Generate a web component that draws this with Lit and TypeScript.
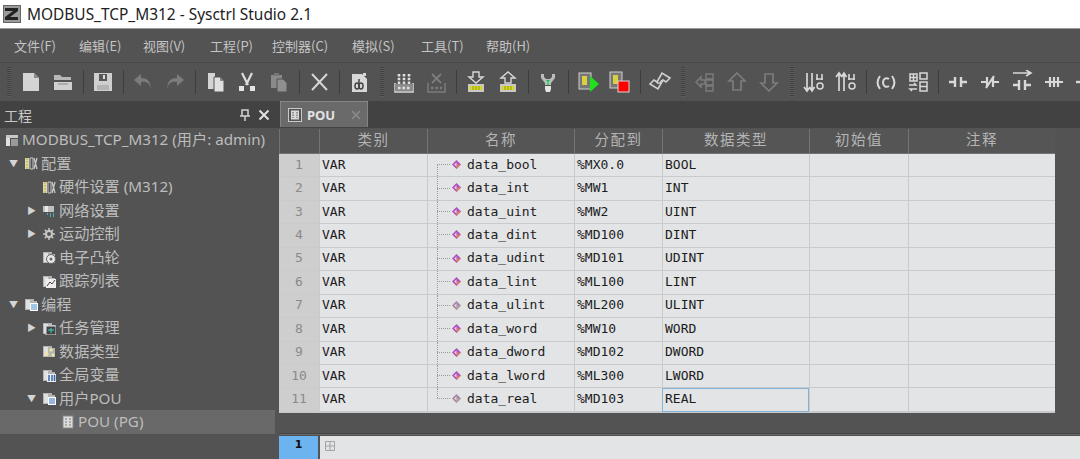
import { LitElement, html, css, svg } from "lit";
import { customElement } from "lit/decorators.js";

const I = (c: unknown) => html`<svg class="tb" viewBox="0 0 24 24" width="24" height="24">${c}</svg>`;
const L = "#d8d8d8", D = "#7c7c7c";

const toolbar: (string | unknown)[] = [
  "grip",
  I(svg`<path d="M4 3h11l5 5v13H4z" fill="#d4d4d4"/><path d="M15 3v5h5" fill="#8a8a8a"/>`),
  I(svg`<path d="M3 5h6l2 2h9v3H3z" fill="#b8b8b8"/><path d="M3 12h18v8H3z" fill="#d0d0d0"/><path d="M7 14h10" stroke="#8a8a8a"/>`),
  "sep",
  I(svg`<path d="M3 3h18v18H3z" fill="#cfcfcf"/><path d="M8 4h8v7H8z" fill="#585858"/><path d="M12 5h2v4h-2z" fill="#ddd"/><path d="M6 15h12v5H6z" fill="#b4b4b4"/>`),
  "sep",
  I(svg`<path d="M19 20c1-6-3-9-9-8v4L3 10l7-6v4c7 0 11 5 9 12z" fill="${D}"/>`),
  I(svg`<path d="M5 20c-1-6 3-9 9-8v4l7-6-7-6v4C7 8 3 13 5 20z" fill="${D}"/>`),
  "sep",
  I(svg`<path d="M5 3h7v16H5z" fill="#d4d4d4"/><path d="M11 7h6l4 4v11H11z" fill="#e0e0e0" stroke="#555"/><path d="M17 7v4h4" fill="#888"/>`),
  I(svg`<path d="M7 3l6 12M17 3l-6 12" stroke="#dcdcdc" stroke-width="2.2"/><rect x="4" y="16" width="5" height="5" fill="#e4e4e4"/><rect x="15" y="16" width="5" height="5" fill="#e4e4e4"/>`),
  I(svg`<path d="M4 5h11v13H4z" fill="#8a8a8a"/><path d="M7 3h5v3H7z" fill="#777"/><path d="M10 9h6l4 4v9H10z" fill="#8f8f8f" stroke="#555"/>`),
  "sep",
  I(svg`<path d="M5 4l15 16M20 4L5 20" stroke="#d6d6d6" stroke-width="2"/>`),
  "sep",
  I(svg`<path d="M5 4h10l5 5v13H5z" fill="#d8d8d8"/><path d="M16 3h3v3h-3z" fill="#d8d8d8"/><ellipse cx="10" cy="16" rx="2" ry="3" fill="none" stroke="#444" stroke-width="1.500"/><ellipse cx="14" cy="16" rx="2" ry="3" fill="none" stroke="#444" stroke-width="1.500"/><path d="M12 9v5" stroke="#444" stroke-width="1.500"/>`),
  "grip",
  I(svg`<path d="M3 13v9h18v-9" fill="none" stroke="${L}" stroke-width="1.500"/><path d="M3 14h18v7H3z" fill="#8a8a8a"/><path d="M7 4v10M12 4v10M17 4v10" stroke="#e0e0e0" stroke-width="2.600" stroke-dasharray="2.500 1.200"/><path d="M6 18h12" stroke="#e0e0e0" stroke-width="2.600" stroke-dasharray="2.500 2"/>`),
  I(svg`<path d="M4 13v9h17v-9" fill="none" stroke="${D}" stroke-width="1.500"/><path d="M8 4l9 9M17 4L8 13" stroke="${D}" stroke-width="1.800"/><path d="M7 18h11" stroke="${D}" stroke-width="2.400" stroke-dasharray="2.500 2"/>`),
  "sep",
  I(svg`<path d="M9 2h6v5h4l-7 6-7-6h4z" fill="none" stroke="${L}" stroke-width="1.400"/><path d="M4 14h16v8H4z" fill="#c8c8c8"/><path d="M6 16h12v4H6z" fill="#d8d820"/><path d="M9 16v4M12 16v4M15 16v4" stroke="#9a9a20"/>`),
  I(svg`<path d="M9 13V8H5l7-6 7 6h-4v5z" fill="none" stroke="${L}" stroke-width="1.400"/><path d="M4 14h16v8H4z" fill="#c8c8c8"/><path d="M6 16h12v4H6z" fill="#d8d820"/><path d="M9 16v4M12 16v4M15 16v4" stroke="#9a9a20"/>`),
  "sep",
  I(svg`<path d="M5 4h3v3l2 2h4l2-2V4h3v4l-4 5v2h-6v-2L5 8z" fill="#bdbdbd"/><path d="M10 10h4l-2 3z" fill="#23c05a"/><path d="M11 13h2v2h-2z" fill="#30d070"/><path d="M9 16h6v3l-1 3h-4l-1-3z" fill="#e4e4e4"/>`),
  "sep",
  I(svg`<rect x="3" y="3" width="12" height="16" fill="#777" stroke="#cfcfcf"/><rect x="6" y="6" width="5" height="9" fill="#d8d040"/><path d="M14 6l9 8-9 8z" fill="#1fe01f"/>`),
  I(svg`<rect x="2" y="2" width="12" height="16" fill="#777" stroke="#cfcfcf"/><rect x="5" y="5" width="5" height="9" fill="#d8d040"/><rect x="10" y="11" width="11" height="11" fill="#ff0000" stroke="#d8d8d8"/>`),
  "sep",
  I(svg`<path d="M2 14l4-4 3 2 5-9 8 5-4 4-3-2-5 9z" fill="none" stroke="#d0d0d0" stroke-width="1.600"/><path d="M9 12c1 3 4 0 5-2" stroke="#d0d0d0" stroke-width="1.600" fill="none"/>`),
  "grip",
  I(svg`<path d="M3 12l5-5v3h4v4H8v3z" fill="none" stroke="${D}" stroke-width="1.500"/><path d="M13 4h7v5h-7zM13 10h7v5h-7zM13 16h7v5h-7z" fill="none" stroke="${D}" stroke-width="1.400"/>`),
  I(svg`<path d="M12 3l8 8h-4v9H8v-9H4z" fill="none" stroke="${D}" stroke-width="1.700"/>`),
  I(svg`<path d="M12 21l8-8h-4V4H8v9H4z" fill="none" stroke="${D}" stroke-width="1.700"/>`),
  "grip",
  I(svg`<path d="M5 3v17M2 17l3 4 3-4M10 3v17M7.500 17l2.500 4 2.500-4" stroke="${L}" stroke-width="1.700" fill="none"/><path d="M15 4v6M20 4v6M14 9h7" stroke="${L}" stroke-width="1.600" fill="none"/><circle cx="18" cy="16" r="3" fill="none" stroke="${L}" stroke-width="1.500"/>`),
  I(svg`<path d="M5 21V4M2 7l3-4 3 4M10 21V4M7.500 7l2.500-4 2.500 4" stroke="${L}" stroke-width="1.700" fill="none"/><path d="M15 4v6M20 4v6M14 9h7" stroke="${L}" stroke-width="1.600" fill="none"/><circle cx="18" cy="16" r="3" fill="none" stroke="${L}" stroke-width="1.500"/>`),
  "sep",
  I(svg`<path d="M6 6c-3 4-3 9 0 13M18 6c3 4 3 9 0 13" stroke="${L}" stroke-width="2" fill="none"/><path d="M15 9c-3-2-6 0-6 3.500s3 5.500 6 3.500" stroke="${L}" stroke-width="2" fill="none"/>`),
  I(svg`<path d="M4 4h7v7H4zM4 7.500h7M7.500 4v7M14 3h7v6h-7zM14 12h7v9h-7zM14 16.500h7" fill="none" stroke="${L}" stroke-width="1.500"/><path d="M3 15h7l-2-2M11 19H4l2 2" fill="none" stroke="${L}" stroke-width="1.500"/>`),
  "sep",
  I(svg`<path d="M3 12h6M15 12h6M9 7v10M15 7v10" stroke="${L}" stroke-width="2.400" fill="none"/>`),
  I(svg`<path d="M3 12h6M15 12h6M9 7v10M15 7v10M8 18L16 6" stroke="${L}" stroke-width="2.200" fill="none"/>`),
  I(svg`<path d="M3 3h17M16 0l5 3-5 3" stroke="${L}" stroke-width="1.600" fill="none"/><path d="M3 15h6M15 15h6M9 10v10M15 10v10" stroke="${L}" stroke-width="2.400" fill="none"/>`),
  I(svg`<path d="M3 12h18M8 7v10M12 7v10M16 7v10" stroke="${L}" stroke-width="2.200" fill="none"/>`),
  I(svg`<path d="M2 12h7" stroke="${L}" stroke-width="2.400" fill="none"/>`),
];

const menus = ["文件(F)", "编辑(E)", "视图(V)", "工程(P)", "控制器(C)", "模拟(S)", "工具(T)", "帮助(H)"];

const G = "#c8c8c8";
const folder = (c: string) => svg`<path d="M1 2h9v2h3v9H1z" fill="#b4b4b4"/><path d="M2 3h4v9H2z" fill="#e0e0e0"/>${c ? svg`<rect x="6" y="6" width="8" height="8" fill="#fff"/><path d="M7 8h6M7 10h6M7 12h6" stroke="${c}"/>` : ""}`;
const S = (c: unknown) => html`<svg class="ti" viewBox="0 0 14 14" width="14" height="14">${c}</svg>`;
const hw = S(svg`<rect x="1" y="2" width="4" height="11" fill="#d9d9b0"/><path d="M3 2v11" stroke="#c8a820" stroke-dasharray="2 1"/><path d="M6 2h3v11H6z" fill="none" stroke="${G}"/><path d="M10 2l3 11M13 2L10 13" stroke="${G}" stroke-width="1.300"/>`);

type Node = { lv: number; arrow?: string; icon: unknown; text: string; sel?: boolean };
const tree: Node[] = [
  { lv: 0, icon: S(svg`<path d="M1 2h12v3H1z" fill="#c8c8c8"/><path d="M1 5h4v8H1z" fill="#e0e0e0"/><path d="M6 6h7v7H6z" fill="#9a9a9a"/>`), text: "MODBUS_TCP_M312 (用户: admin)" },
  { lv: 1, arrow: "▼", icon: hw, text: "配置" },
  { lv: 2, icon: hw, text: "硬件设置 (M312)" },
  { lv: 2, arrow: "▶", icon: S(svg`<path d="M1 3h11v6H1z" fill="#c0c0c0"/><path d="M3 3h3v6H3z" fill="#e8e8e8"/><path d="M5 11h1M8 11h1M11 11h1M8 13h1M11 13h1" stroke="#4fd0e0" stroke-width="1.500"/>`), text: "网络设置" },
  { lv: 2, arrow: "▶", icon: S(svg`<circle cx="7" cy="7" r="3" fill="none" stroke="#c8c8c8" stroke-width="2"/><path d="M7 1v3M7 10v3M1 7h3M10 7h3M2.800 2.800l2 2M9.200 9.200l2 2M11.200 2.800l-2 2M4.800 9.200l-2 2" stroke="#c8c8c8" stroke-width="1.500"/>`), text: "运动控制" },
  { lv: 2, icon: S(svg`${folder("")}<circle cx="9" cy="9" r="4.500" fill="#e8e8e8" stroke="#666"/><circle cx="9" cy="9" r="1.500" fill="#666"/>`), text: "电子凸轮" },
  { lv: 2, icon: S(svg`${folder("")}<rect x="4" y="5" width="10" height="9" fill="#eee"/><path d="M5 12l3-4 2 2 3-4" stroke="#444" fill="none"/>`), text: "跟踪列表" },
  { lv: 1, arrow: "▼", icon: S(folder("#3f8fd0")), text: "编程" },
  { lv: 2, arrow: "▶", icon: S(svg`${folder("")}<rect x="4" y="5" width="10" height="9" fill="#444" stroke="#ddd"/><path d="M6 9h6M9 7v5" stroke="#3fd0c0"/>`), text: "任务管理" },
  { lv: 2, icon: S(svg`${folder("")}<path d="M9 4l2 2-2 2-2-2zM5 8l2 2-2 2-2-2zM11 9l2 2-2 2-2-2z" fill="#f0e890"/>`), text: "数据类型" },
  { lv: 2, icon: S(svg`${folder("")}<rect x="5" y="6" width="9" height="8" fill="#eee"/><path d="M7 7v6M10 7v6M12.500 7v6" stroke="#3068b0" stroke-width="1.500"/>`), text: "全局变量" },
  { lv: 2, arrow: "▼", icon: S(folder("#2f6fc0")), text: "用户POU" },
  { lv: 3, icon: S(svg`<rect x="2" y="1" width="10" height="12" fill="#dcdcdc" stroke="#888"/><path d="M4 4h2M8 4h2M4 7h2M8 7h2M4 10h2M8 10h2" stroke="#777"/>`), text: "POU (PG)", sel: true },
];

const rows = [
  ["data_bool", "%MX0.0", "BOOL"], ["data_int", "%MW1", "INT"], ["data_uint", "%MW2", "UINT"],
  ["data_dint", "%MD100", "DINT"], ["data_udint", "%MD101", "UDINT"], ["data_lint", "%ML100", "LINT"],
  ["data_ulint", "%ML200", "ULINT"], ["data_word", "%MW10", "WORD"], ["data_dword", "%MD102", "DWORD"],
  ["data_lword", "%ML300", "LWORD"], ["data_real", "%MD103", "REAL"],
];
const heads = ["", "类别", "名称", "分配到", "数据类型", "初始值", "注释"];

const diamond = (muted: boolean) => html`<svg class="dia" viewBox="0 0 10 10" width="9" height="9">
  <path d="M5 0l5 5-5 5-5-5z" fill="${muted ? "#a08aa5" : "#b050c0"}"/><path d="M5 5v5l5-5z" fill="${muted ? "#b8a090" : "#d88060"}"/><path d="M5 2.500L2.500 5 5 7.500z" fill="#e8d0ec"/></svg>`;

@customElement("app-root")
export class AppRoot extends LitElement {
  static styles = css`
    :host { display: flex; flex-direction: column; width: 1080px; height: 459px; overflow: hidden; background: #535353;
      font-family: "Noto Sans", "Noto Sans CJK SC", sans-serif; }
    .title { height: 28px; flex: none; background: #fff; display: flex; align-items: center; gap: 6px; padding-left: 3px;
      border-bottom: 1px solid #9a9a9a; color: #222; font-size: 15.450px; white-space: nowrap; }
    .logo { filter: blur(.4px); }
    .menu { height: 33px; flex: none; display: grid; grid-template-columns: 65px 64px 67px 62px 80px 69px 65px auto;
      padding-left: 14px; align-items: center; background: #535353; color: #c4c4c4; font-size: 13px; font-family: "Noto Sans CJK SC", sans-serif; }
    .toolbar { height: 38px; flex: none; display: flex; align-items: center; padding-left: 2px; background: #535353;
      border-top: 1px solid #484848; box-sizing: border-box; overflow: hidden; }
    .slot { width: 32px; flex: none; display: flex; justify-content: center; }
    .sep { width: 8px; flex: none; display: flex; justify-content: center; }
    .sep::before { content: ""; width: 1px; height: 24px; background: #3d3d3d; }
    .grip { width: 13px; flex: none; height: 30px; display: flex; justify-content: center; }
    .grip::before { content: ""; width: 4px; background: repeating-linear-gradient(#404040 0 1px, #5c5c5c 1px 2px); }
    .tb { display: block; filter: blur(.45px); }
    .body { flex: 1; display: flex; min-height: 0; }
    .left { width: 275px; flex: none; display: flex; flex-direction: column; }
    .phead { height: 27px; flex: none; display: flex; align-items: center; background: #424242; color: #c8c8c8;
      font-size: 14px; padding: 0 5px 0 4px; font-family: "Noto Sans CJK SC", sans-serif; margin-top: 1px; box-sizing: border-box; }
    .phead span { flex: 1; }
    .phead svg { display: block; margin-left: 7px; }
    .tree { color: #bdbdbd; font-size: 15.200px; line-height: 1; font-family: "Noto Sans", "Noto Sans CJK SC", sans-serif; }
    .node { height: 23.500px; display: flex; align-items: center; white-space: nowrap; }
    .node.sel { background: #696969; }
    .lv0 { padding-left: 5px; }
    .lv1 { padding-left: 8px; }
    .lv2 { padding-left: 26px; }
    .lv3 { padding-left: 45px; }
    .arrow { width: 16px; flex: none; font-size: 9px; color: #d4d4d4; line-height: 1; text-align: left; padding-left: 1px; box-sizing: border-box; }
    .icon { width: 17px; flex: none; display: flex; }
    .ti { display: block; filter: blur(.3px); }
    .right { flex: 1; min-width: 0; margin-left: 4px; display: flex; flex-direction: column; }
    .tabs { height: 27px; flex: none; margin: 1px 0 0 -4px; padding-left: 5px; background: #424242; box-sizing: border-box; }
    .tab { width: 88px; height: 26px; box-sizing: border-box; background: #6a6a6a; border: 1px solid #858585; border-bottom: 0;
      display: flex; align-items: center; padding-left: 7px; gap: 5px; color: #e4e4e4; font: bold 13px "Noto Sans", sans-serif; }
    .tab .x { margin-left: 11px; display: block; }
    .grid { margin-top: 1px; width: 776px; flex: none; display: grid;
      grid-template-columns: 40px 108px 147px 88px 147px 99px 147px; grid-template-rows: 25px repeat(11, 23.450px);
      font: 13px "DejaVu Sans Mono", monospace; color: #1c1c1c; border-right: 1px solid #c9cacb; border-bottom: 1px solid #c9cacb; box-sizing: border-box; }
    .h { background: #555; color: #b4b4b4; border-left: 1px solid #737373; border-bottom: 1px solid #737373; box-sizing: border-box; padding-bottom: 2px;
      display: flex; align-items: center; justify-content: center; font: 14.500px/1 "DejaVu Sans Mono", "Noto Sans CJK SC", monospace; letter-spacing: 1.500px; }
    .c { background: #e3e4e6; border-left: 1px solid #c9cacb; border-bottom: 1.500px solid #c9cacb; box-sizing: border-box; padding-bottom: 2px;
      display: flex; align-items: center; padding-left: 2px; white-space: nowrap; position: relative; }
    .n { background: #cecece; color: #8a8a8a; justify-content: center; padding: 0 0 2px; border-left: 0; }
    .c.name { padding-left: 39px; }
    .name::before { content: ""; position: absolute; left: 9px; top: 45%; width: 13px; border-top: 1px dotted #9a9a9a; }
    .name::after { content: ""; position: absolute; left: 9px; top: 0; bottom: 0; border-left: 1px dotted #9a9a9a; }
    .name.first::after { top: 45%; }
    .name.last::after { bottom: 55%; }
    .dia { position: absolute; left: 24px; top: 6px; }
    .focus { outline: 1px solid #86b2d6; outline-offset: -1px; }
    .spacer { flex: 1; }
    .sheet { height: 26px; flex: none; border-top: 1px solid #464646; box-shadow: inset 0 1px 0 #666; padding-top: 2px; display: flex; gap: 2px; box-sizing: border-box; }
    .stab { width: 39px; background: #6cb4f0; color: #111; font: bold 11px "DejaVu Sans", sans-serif; display: flex; justify-content: center; padding-top: 2px; box-sizing: border-box; }
    .sfill { flex: 1; background: #e3e4e6; display: flex; align-items: center; padding: 0 0 3px 5px; }
  `;

  render() {
    return html`
      <div class="title">
        <svg class="logo" width="18" height="18" viewBox="0 0 18 18"><rect width="18" height="18" fill="#666"/><rect x="1" y="1" width="16" height="16" fill="#9a9a9a"/><path d="M2 3h13v3L7 12h8v3H2v-3l8-6H2z" fill="#222"/></svg>
        <span>MODBUS_TCP_M312 - Sysctrl Studio 2.1</span>
      </div>
      <div class="menu">${menus.map((m) => html`<span>${m}</span>`)}</div>
      <div class="toolbar">
        ${toolbar.map((t) => t === "sep" ? html`<div class="sep"></div>` : t === "grip" ? html`<div class="grip"></div>` : html`<div class="slot">${t}</div>`)}
      </div>
      <div class="body">
        <div class="left">
          <div class="phead"><span>工程</span>
            <svg width="12" height="12" viewBox="0 0 12 12"><path d="M3 1h6v6H3zM1 7h10M6 7v5" fill="none" stroke="#d4d4d4" stroke-width="1.500"/></svg>
            <svg width="12" height="12" viewBox="0 0 12 12"><path d="M1.500 1.500l9 9M10.500 1.500l-9 9" stroke="#e0e0e0" stroke-width="2"/></svg>
          </div>
          <div class="tree">
            ${tree.map((n) => html`<div class="node lv${n.lv} ${n.sel ? "sel" : ""}">
              ${n.lv > 0 ? html`<span class="arrow">${n.arrow ?? ""}</span>` : ""}
              <span class="icon">${n.icon}</span><span>${n.text}</span></div>`)}
          </div>
        </div>
        <div class="right">
          <div class="tabs"><div class="tab">
            <svg width="14" height="14" viewBox="0 0 14 14"><rect x=".5" y=".5" width="13" height="13" fill="#555" stroke="#c8c8c8"/><rect x="3" y="2.500" width="8" height="9" fill="#d8d8d8"/><path d="M5 4v6M9 4v6" stroke="#555" stroke-dasharray="1.500 1"/></svg>
            POU
            <svg class="x" width="10" height="10" viewBox="0 0 10 10"><path d="M1 1l8 8M9 1L1 9" stroke="#8c8c8c" stroke-width="1.500"/></svg>
          </div></div>
          <div class="grid">
            ${heads.map((h) => html`<div class="h">${h}</div>`)}
            ${rows.map((r, i) => html`
              <div class="c n">${i + 1}</div>
              <div class="c">VAR</div>
              <div class="c name ${i === 0 ? "first" : ""} ${i === rows.length - 1 ? "last" : ""}">${diamond(i === 6 || i === 10)}${r[0]}</div>
              <div class="c">${r[1]}</div>
              <div class="c ${i === rows.length - 1 ? "focus" : ""}">${r[2]}</div>
              <div class="c"></div>
              <div class="c"></div>`)}
          </div>
          <div class="spacer"></div>
          <div class="sheet">
            <div class="stab">1</div>
            <div class="sfill"><svg width="10" height="10" viewBox="0 0 10 10"><path d="M.5.500h9v9h-9zM5 .5v9M.5 5h9" fill="none" stroke="#a4a4a4"/></svg></div>
          </div>
        </div>
      </div>
    `;
  }
}
